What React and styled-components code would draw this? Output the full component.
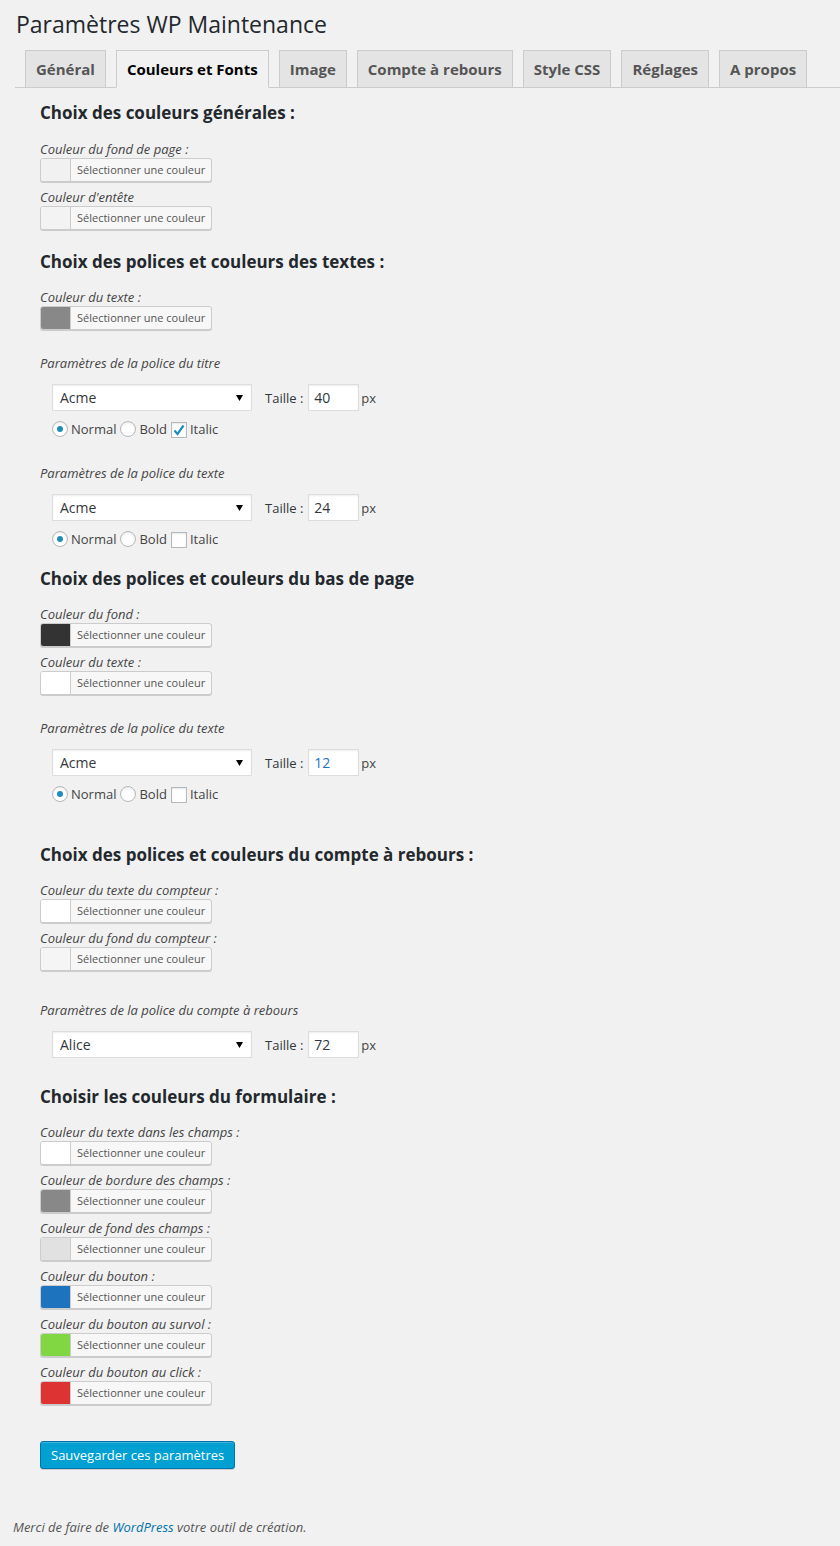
import React from "react";
import styled, { createGlobalStyle } from "styled-components";

const Global = createGlobalStyle`
  html, body { margin: 0; padding: 0; background: #f1f1f1; }
  body { font-family: "Open Sans", "Liberation Sans", sans-serif; color: #444; font-size: 13px; }
  * { box-sizing: border-box; }
`;

const Page = styled.div`
  padding-top: 10px;
  min-height: 1546px;
`;

const Title = styled.h1`
  margin: 0 0 11px 16px;
  font-size: 23px;
  line-height: 29px;
  font-weight: 400;
  color: #23282d;
`;

const TabBar = styled.nav`
  display: flex;
  gap: 10px;
  margin-left: 15px;
  padding-left: 10px;
  border-bottom: 1px solid #ccc;
  height: 38px;
`;

const Tab = styled.a`
  display: block;
  padding: 6px 10px;
  font-size: 15px;
  line-height: 24px;
  font-weight: 700;
  border: 1px solid #ccc;
  border-bottom: ${p => (p.$active ? "1px solid #f1f1f1" : "0")};
  height: ${p => (p.$active ? "38px" : "37px")};
  background: ${p => (p.$active ? "#f1f1f1" : "#e4e4e4")};
  color: ${p => (p.$active ? "#000" : "#555")};
  text-decoration: none;
  white-space: nowrap;
`;

const Content = styled.div`
  padding-left: 40px;
`;

const Heading = styled.h3`
  margin: ${p => p.$mt}px 0 0 0;
  font-size: 17px;
  line-height: 24px;
  font-weight: 700;
  color: #23282d;
`;

const FieldBlock = styled.div`
  margin-top: ${p => p.$mt}px;
  display: flex;
  flex-direction: column;
  align-items: flex-start;
`;

const Label = styled.em`
  display: block;
  font-size: 13px;
  line-height: 18px;
  color: #444;
`;

const ColorButton = styled.span`
  display: inline-flex;
  height: 24px;
  border: 1px solid #ccc;
  border-radius: 3px;
  background: #f7f7f7;
  box-shadow: 0 1px 0 #ccc;
  overflow: hidden;
`;

const Swatch = styled.span`
  width: 30px;
  background: ${p => p.$color};
  border-right: 1px solid #ccc;
`;

const ColorText = styled.span`
  padding: 0 6px;
  font-size: 11px;
  line-height: 22px;
  color: #555;
`;

const ControlRow = styled.div`
  margin-top: ${p => p.$mt}px;
  padding-left: 12px;
  display: flex;
  align-items: center;
`;

const SelectBox = styled.div`
  width: 200px;
  height: 27px;
  background: #fff;
  border: 1px solid #ddd;
  box-shadow: inset 0 1px 2px rgba(0, 0, 0, 0.07);
  display: flex;
  align-items: center;
  justify-content: space-between;
  padding: 0 8px 0 7px;
  font-size: 14px;
  color: #32373c;
`;

const SizeLabel = styled.span`
  margin-left: 13px;
  font-size: 13px;
  color: #32373c;
`;

const SizeInput = styled.div`
  margin-left: 5px;
  width: 51px;
  height: 27px;
  background: #fff;
  border: 1px solid #ddd;
  box-shadow: inset 0 1px 2px rgba(0, 0, 0, 0.07);
  padding: 0 5px;
  font-size: 14px;
  line-height: 25px;
  color: ${p => p.$color || "#32373c"};
`;

const Unit = styled.span`
  margin-left: 2px;
  font-size: 13px;
  color: #444;
`;

const OptionRow = styled.div`
  margin-top: 9px;
  padding-left: 12px;
  display: flex;
  align-items: center;
  height: 18px;
  gap: 4px;
  font-size: 13px;
  color: #444;
`;

const Option = styled.span`
  display: inline-flex;
  align-items: center;
  gap: 3px;
`;

const Radio = styled.span`
  width: 16px;
  height: 16px;
  border-radius: 50%;
  border: 1px solid #b4b9be;
  background: #fff;
  box-shadow: inset 0 1px 2px rgba(0, 0, 0, 0.1);
  display: inline-flex;
  align-items: center;
  justify-content: center;
  &::after {
    content: "";
    width: 6px;
    height: 6px;
    border-radius: 50%;
    background: ${p => (p.$checked ? "#1e8cbe" : "transparent")};
  }
`;

const Check = styled.span`
  width: 16px;
  height: 16px;
  margin-top: 2px;
  border: 1px solid #b4b9be;
  background: #fff;
  box-shadow: inset 0 1px 2px rgba(0, 0, 0, 0.1);
  display: inline-flex;
  align-items: center;
  justify-content: center;
`;

const SaveButton = styled.button`
  margin-top: 36px;
  height: 28px;
  padding: 0 10px;
  border: 1px solid #0073aa;
  border-radius: 3px;
  background: #00a0d2;
  color: #fff;
  font-family: "Open Sans", "Liberation Sans", sans-serif;
  font-size: 13px;
  line-height: 26px;
  box-shadow: inset 0 1px 0 rgba(120, 200, 230, 0.5), 0 1px 0 rgba(0, 0, 0, 0.15);
`;

const Footer = styled.p`
  margin: 49px 0 0 13px;
  font-size: 13px;
  line-height: 18px;
  font-style: italic;
  color: #555;
  a { color: #0073aa; text-decoration: none; }
`;

const Arrow = () => (
  <svg width="7" height="6" viewBox="0 0 7 6">
    <polygon points="0,0 7,0 3.5,6" fill="#000" />
  </svg>
);

const Field = ({ label, color, mt = 6 }) => (
  <FieldBlock $mt={mt}>
    <Label>{label}</Label>
    <ColorButton>
      <Swatch $color={color} />
      <ColorText>Sélectionner une couleur</ColorText>
    </ColorButton>
  </FieldBlock>
);

const FontSettings = ({ label, font, size, sizeColor, mt = 24, italic, noStyle }) => (
  <>
    <FieldBlock $mt={mt}>
      <Label>{label}</Label>
    </FieldBlock>
    <ControlRow $mt={12}>
      <SelectBox>
        <span>{font}</span>
        <Arrow />
      </SelectBox>
      <SizeLabel>Taille :</SizeLabel>
      <SizeInput $color={sizeColor}>{size}</SizeInput>
      <Unit>px</Unit>
    </ControlRow>
    {!noStyle && (
      <OptionRow>
        <Option><Radio $checked />Normal</Option>
        <Option><Radio />Bold</Option>
        <Option>
          <Check>
            {italic && (
              <svg width="14" height="14" viewBox="0 0 14 14">
                <path d="M2.5 7.5 L5.5 11 L11.5 2.5" stroke="#1e8cbe" strokeWidth="2.2" fill="none" />
              </svg>
            )}
          </Check>
          Italic
        </Option>
      </OptionRow>
    )}
  </>
);

const tabs = ["Général", "Couleurs et Fonts", "Image", "Compte à rebours", "Style CSS", "Réglages", "A propos"];

export default function App() {
  return (
    <Page>
      <Global />
      <Title>Paramètres WP Maintenance</Title>
      <TabBar>
        {tabs.map(t => (
          <Tab key={t} $active={t === "Couleurs et Fonts"}>{t}</Tab>
        ))}
      </TabBar>
      <Content>
        <Heading $mt={13}>Choix des couleurs générales :</Heading>
        <Field mt={15} label="Couleur du fond de page :" color="#f1f1f1" />
        <Field label="Couleur d'entête" color="#f3f3f3" />

        <Heading $mt={20}>Choix des polices et couleurs des textes :</Heading>
        <Field mt={14} label="Couleur du texte :" color="#888888" />
        <FontSettings label="Paramètres de la police du titre" font="Acme" size="40" italic />
        <FontSettings mt={26} label="Paramètres de la police du texte" font="Acme" size="24" />

        <Heading $mt={19}>Choix des polices et couleurs du bas de page</Heading>
        <Field mt={14} label="Couleur du fond :" color="#333333" />
        <Field label="Couleur du texte :" color="#ffffff" />
        <FontSettings label="Paramètres de la police du texte" font="Acme" size="12" sizeColor="#1e73be" />

        <Heading $mt={40}>Choix des polices et couleurs du compte à rebours :</Heading>
        <Field mt={14} label="Couleur du texte du compteur :" color="#ffffff" />
        <Field label="Couleur du fond du compteur :" color="#f5f5f5" />
        <FontSettings mt={30} label="Paramètres de la police du compte à rebours" font="Alice" size="72" noStyle />

        <Heading $mt={27}>Choisir les couleurs du formulaire :</Heading>
        <Field mt={14} label="Couleur du texte dans les champs :" color="#ffffff" />
        <Field label="Couleur de bordure des champs :" color="#888888" />
        <Field label="Couleur de fond des champs :" color="#e1e1e1" />
        <Field label="Couleur du bouton :" color="#1e73be" />
        <Field label="Couleur du bouton au survol :" color="#81d742" />
        <Field label="Couleur du bouton au click :" color="#dd3333" />

        <SaveButton>Sauvegarder ces paramètres</SaveButton>
      </Content>
      <Footer>
        Merci de faire de <a href="#">WordPress</a> votre outil de création.
      </Footer>
    </Page>
  );
}
